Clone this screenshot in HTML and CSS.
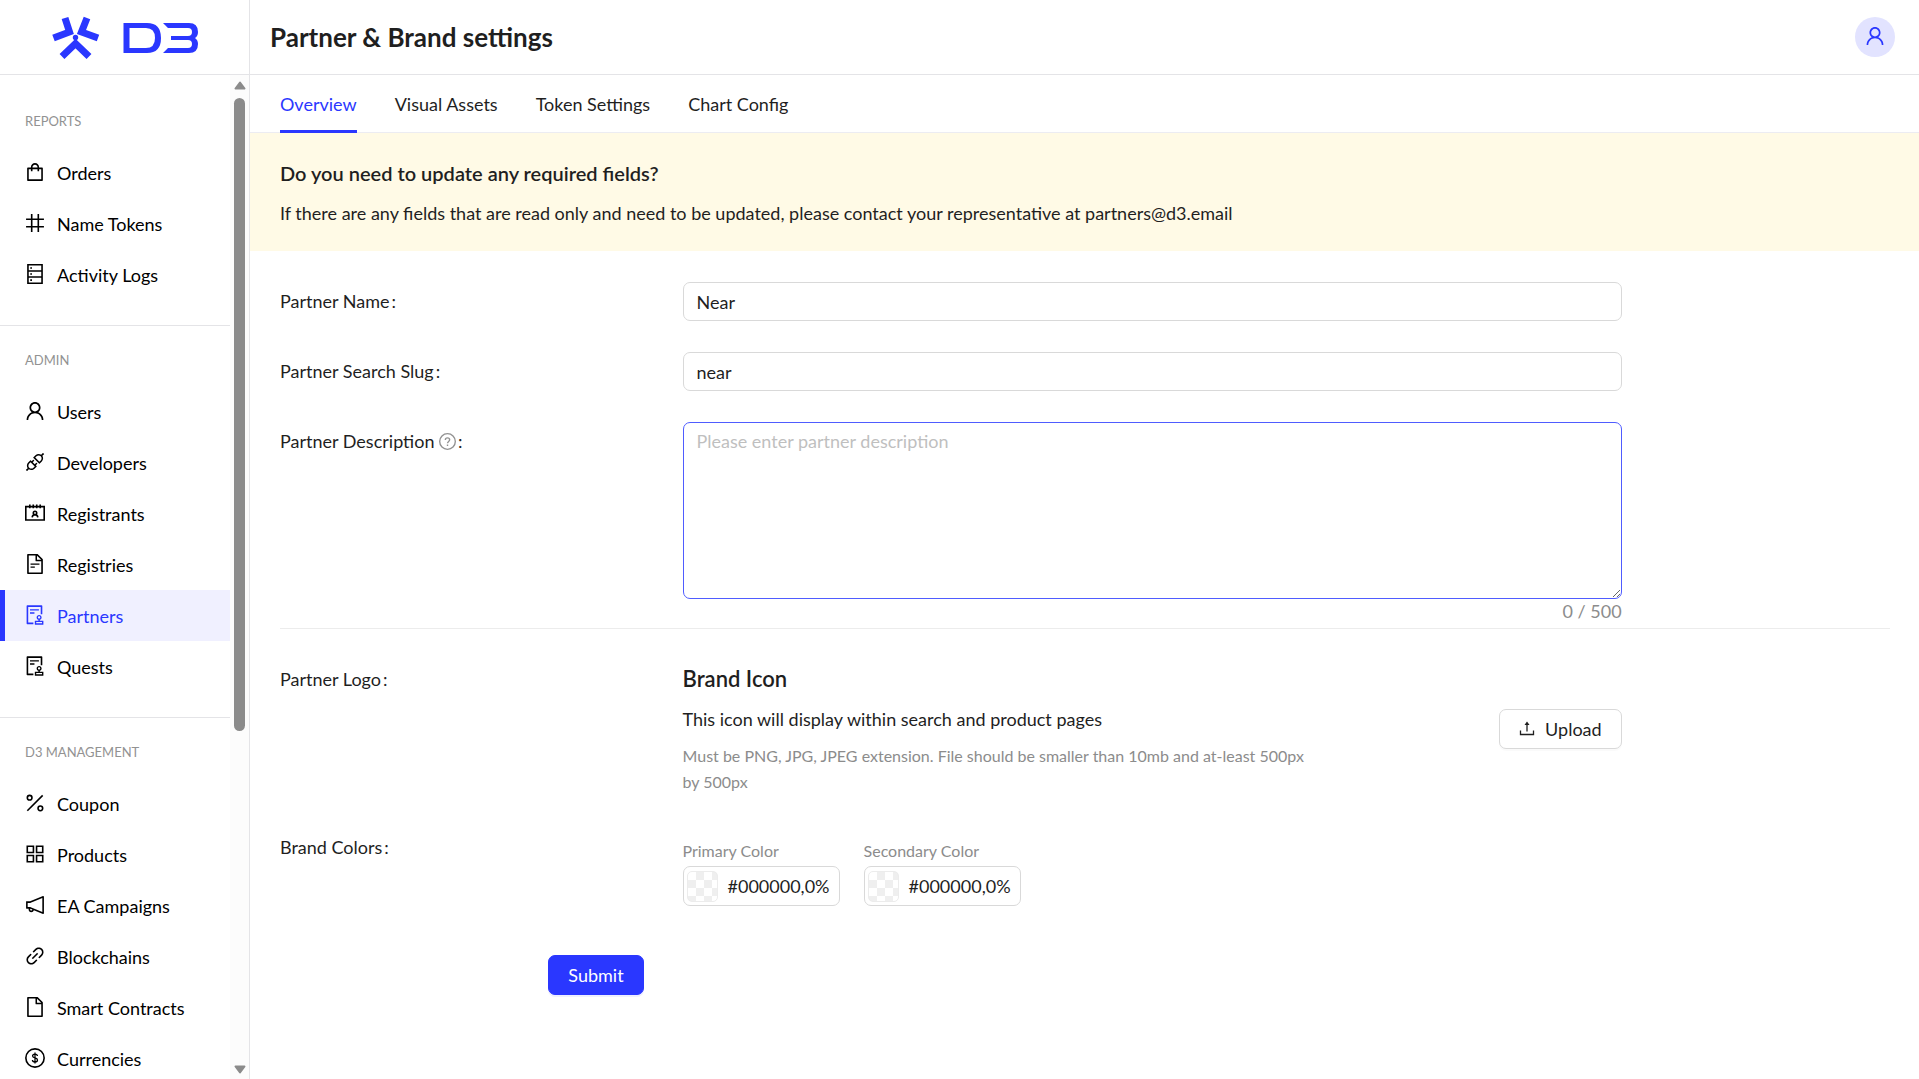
FILE: index.html
```html
<!DOCTYPE html>
<html lang="en">
<head>
	<meta charset="utf-8">
	<meta name="viewport" content="width=device-width, initial-scale=1">
	<title>Partner &amp; Brand settings</title>
	<link rel="stylesheet" href="styles.css">
</head>
<body>

	<!-- icons used more than once -->
	<svg class="sprite" aria-hidden="true">
		<symbol id="icon-user" viewBox="64 64 896 896">
			<path d="M858.5 763.6a374 374 0 00-80.6-119.5 375.63 375.63 0 00-119.5-80.6c-.4-.2-.8-.3-1.2-.5C719.5 518 760 444.7 760 362c0-137-111-248-248-248S264 225 264 362c0 82.7 40.5 156 102.8 201.1-.4.2-.8.3-1.2.5-44.8 18.9-85 46-119.5 80.6a375.63 375.63 0 00-80.6 119.5A371.7 371.7 0 00136 901.8a8 8 0 008 8.2h60c4.4 0 7.9-3.5 8-7.8 2-77.2 33-149.5 87.8-204.3 56.7-56.7 132-87.9 212.2-87.9s155.5 31.2 212.2 87.9C779 752.7 810 825 812 902.2c.1 4.4 3.6 7.8 8 7.8h60a8 8 0 008-8.2c-1-47.8-10.9-94.3-29.5-138.2zM512 534c-45.9 0-89.1-17.9-121.6-50.4S340 407.9 340 362c0-45.9 17.9-89.1 50.4-121.6S466.1 190 512 190s89.1 17.9 121.6 50.4S684 316.1 684 362c0 45.9-17.9 89.1-50.4 121.6S557.9 534 512 534z"/>
		</symbol>
		<symbol id="icon-file" viewBox="64 64 896 896">
			<path d="M854.6 288.6L639.4 73.4c-6-6-14.1-9.4-22.6-9.4H192c-17.7 0-32 14.3-32 32v832c0 17.7 14.3 32 32 32h640c17.7 0 32-14.3 32-32V311.3c0-8.5-3.4-16.7-9.4-22.7zM790.2 326H602V137.8L790.2 326zm1.8 562H232V136h302v216a42 42 0 0042 42h216v494z"/>
		</symbol>
		<symbol id="icon-audit" viewBox="64 64 896 896">
			<path d="M296 250c-4.400 0-8 3.600-8 8v48c0 4.400 3.600 8 8 8h384c4.400 0 8-3.600 8-8v-48c0-4.400-3.600-8-8-8H296zm184 144H296c-4.400 0-8 3.600-8 8v48c0 4.400 3.600 8 8 8h184c4.400 0 8-3.600 8-8v-48c0-4.400-3.600-8-8-8zm-48 458H208V148h560v320c0 4.400 3.600 8 8 8h56c4.400 0 8-3.600 8-8V108c0-17.700-14.300-32-32-32H168c-17.700 0-32 14.300-32 32v784c0 17.700 14.300 32 32 32h264c4.400 0 8-3.600 8-8v-56c0-4.400-3.600-8-8-8zm440-88H728v-36.600c46.300-13.800 80-56.600 80-107.400 0-61.900-50.100-112-112-112s-112 50.100-112 112c0 50.700 33.700 93.600 80 107.400V764H520c-8.800 0-16 7.200-16 16v152c0 8.800 7.200 16 16 16h352c8.800 0 16-7.200 16-16V780c0-8.800-7.200-16-16-16zM646 620c0-27.600 22.400-50 50-50s50 22.400 50 50-22.400 50-50 50-50-22.400-50-50zm180 266H566v-60h260v60z"/>
		</symbol>
	</svg>

	<div class="layout">
		<aside class="sidebar">
			<a class="logo" href="#" aria-label="D3">
				<svg viewBox="0 0 147 44" width="147" height="44">
					<g fill="none" stroke="#2a37ff" stroke-width="7">
						<path d="M14 3l4.500 14L2.500 23"/>
						<path d="M36 3l-5.500 14L47 23"/>
						<path d="M11 41.500l13.500-13 13.500 13"/>
					</g>
					<circle cx="24.500" cy="22.500" r="2.700" fill="#2a37ff"/>
					<path fill="#2a37ff" fill-rule="evenodd" d="M72.500 8H96q14 0 14 15T96 38H72.500zM78.500 13v20H95q9 0 9-10T95 13z"/>
					<path fill="#2a37ff" d="M112 8h26q9 0 9 9 0 4-3 6 3 2 3 6 0 9-9 9h-26l5-5h20q4 0 4-4t-4-4h-17v-4h17q4 0 4-4t-4-4h-20z"/>
				</svg>
			</a>
			<div class="sidebar-body">
				<nav class="menu">
					<section class="menu-group">
						<h2>REPORTS</h2>
						<a href="#">
							<svg class="icon" viewBox="64 64 896 896"><path d="M832 312H696v-16c0-101.600-82.400-184-184-184s-184 82.400-184 184v16H192c-17.700 0-32 14.300-32 32v536c0 17.700 14.300 32 32 32h640c17.700 0 32-14.300 32-32V344c0-17.700-14.300-32-32-32zm-432-16c0-61.900 50.100-112 112-112s112 50.100 112 112v16H400v-16zm392 544H232V384h96v88c0 4.400 3.600 8 8 8h56c4.400 0 8-3.600 8-8v-88h224v88c0 4.400 3.600 8 8 8h56c4.400 0 8-3.600 8-8v-88h96v456z"/></svg>
							Orders
						</a>
						<a href="#">
							<svg class="icon line" viewBox="64 64 896 896"><path d="M112 346h800M112 678h800M364 112v800M660 112v800"/></svg>
							Name Tokens
						</a>
						<a href="#">
							<svg class="icon line" viewBox="64 64 896 896"><path d="M196 100h632v824H196zM196 380h632M196 644h632"/><path d="M300 240h76M300 512h76M300 784h76"/></svg>
							Activity Logs
						</a>
					</section>
					<section class="menu-group">
						<h2>ADMIN</h2>
						<a href="#">
							<svg class="icon"><use href="#icon-user"/></svg>
							Users
						</a>
						<a href="#">
							<svg class="icon" viewBox="64 64 896 896"><path d="M917.700 148.800l-42.400-42.400c-1.600-1.600-3.600-2.300-5.700-2.300s-4.100.8-5.700 2.300l-76.100 76.100a199.270 199.270 0 00-112.100-34.300c-51.200 0-102.400 19.500-141.500 58.600L432.300 308.700a8.030 8.030 0 000 11.300L704 591.700c1.600 1.600 3.600 2.300 5.700 2.300 2 0 4.100-.8 5.700-2.300l101.900-101.900c68.900-69 77-175.700 24.300-253.500l76.100-76.100c3.100-3.200 3.100-8.300 0-11.400zM769.100 441.700l-59.400 59.400-186.800-186.800 59.400-59.400c24.900-24.900 58.100-38.700 93.400-38.700 35.300 0 68.400 13.700 93.400 38.700 24.900 24.900 38.700 58.100 38.700 93.400 0 35.300-13.800 68.400-38.700 93.400zm-190.200 105a8.030 8.030 0 00-11.300 0L501 613.300 410.700 523l66.700-66.700c3.100-3.100 3.100-8.200 0-11.300L441 408.600a8.030 8.030 0 00-11.300 0L363 475.300l-43-43a7.850 7.850 0 00-5.700-2.300c-2 0-4.100.8-5.700 2.300L206.800 534.200c-68.900 69-77 175.700-24.300 253.500l-76.100 76.100a8.030 8.030 0 000 11.300l42.400 42.400c1.600 1.600 3.600 2.300 5.700 2.300s4.100-.8 5.700-2.300l76.100-76.100c33.700 22.900 72.900 34.300 112.100 34.300 51.200 0 102.400-19.500 141.500-58.600l101.900-101.900c3.100-3.100 3.100-8.200 0-11.300l-43-43 66.700-66.700c3.100-3.100 3.100-8.200 0-11.300l-36.600-36.200zM441.700 769.100a131.320 131.320 0 01-93.400 38.700c-35.300 0-68.400-13.700-93.400-38.700a131.320 131.320 0 01-38.700-93.400c0-35.300 13.700-68.400 38.700-93.400l59.400-59.400 186.800 186.800-59.400 59.400z"/></svg>
							Developers
						</a>
						<a href="#">
							<svg class="icon line" viewBox="64 64 896 896"><path d="M100 228h824v600H100z"/><path d="M280 130v166M434 130v166M590 130v166M744 130v166"/><path d="M386 706c6-76 58-116 126-116s120 40 126 116"/><circle cx="512" cy="508" r="76"/></svg>
							Registrants
						</a>
						<a href="#">
							<svg class="icon line" viewBox="64 64 896 896"><use href="#icon-file" x="64" y="64" width="896" height="896" class="solid"/><path class="thin" d="M312 516h400M312 652h192"/></svg>
							Registries
						</a>
						<a href="#" class="active" aria-current="page">
							<svg class="icon"><use href="#icon-audit"/></svg>
							Partners
						</a>
						<a href="#">
							<svg class="icon"><use href="#icon-audit"/></svg>
							Quests
						</a>
					</section>
					<section class="menu-group">
						<h2>D3 MANAGEMENT</h2>
						<a href="#">
							<svg class="icon line" viewBox="64 64 896 896"><path d="M856 172L168 860"/><circle cx="272" cy="272" r="104"/><circle cx="752" cy="752" r="104"/></svg>
							Coupon
						</a>
						<a href="#">
							<svg class="icon line" viewBox="64 64 896 896"><path d="M166 166h276v276H166zM582 166h276v276H582zM166 582h276v276H166zM582 582h276v276H582z"/></svg>
							Products
						</a>
						<a href="#">
							<svg class="icon" viewBox="64 64 896 896"><path d="M880 112c-3.800 0-7.700.7-11.600 2.300L292 345.900H128c-8.800 0-16 7.400-16 16.600v299c0 9.200 7.200 16.600 16 16.600h101.700c-3.700 11.600-5.700 23.900-5.700 36.400 0 65.900 53.800 119.500 120 119.500 55.400 0 102.100-37.600 115.900-88.400l408.600 164.200c3.900 1.500 7.800 2.300 11.600 2.300 16.900 0 32-14.200 32-33.200V145.200C912 126.200 897 112 880 112zM344 762.300c-26.500 0-48-21.400-48-47.800 0-11.200 3.900-21.900 11-30.400l84.900 34.100c-2 24.600-22.700 44.100-47.900 44.100zm496 58.400L318.800 611.300l-12.900-5.200H184V417.900h121.900l12.900-5.200L840 203.300v617.400z"/></svg>
							EA Campaigns
						</a>
						<a href="#">
							<svg class="icon" viewBox="64 64 896 896"><path d="M574 665.400a8.030 8.030 0 00-11.300 0L446.500 781.600c-53.800 53.800-144.600 59.500-204 0-59.500-59.500-53.800-150.200 0-204l116.200-116.200c3.100-3.100 3.100-8.200 0-11.300l-39.800-39.800a8.030 8.030 0 00-11.300 0L191.400 526.500c-84.600 84.600-84.600 221.500 0 306s221.500 84.600 306 0l116.200-116.200c3.100-3.100 3.100-8.200 0-11.300L574 665.400zm258.600-474c-84.600-84.600-221.500-84.600-306 0L410.300 307.600a8.030 8.030 0 000 11.300l39.700 39.700c3.100 3.100 8.200 3.100 11.300 0l116.200-116.200c53.800-53.800 144.600-59.500 204 0 59.500 59.500 53.800 150.200 0 204L665.300 562.600a8.030 8.030 0 000 11.300l39.800 39.800c3.100 3.100 8.200 3.100 11.300 0l116.200-116.200c84.500-84.600 84.500-221.500 0-306.100zM610.100 372.300a8.030 8.030 0 00-11.300 0L372.300 598.700a8.030 8.030 0 000 11.300l39.600 39.600c3.100 3.100 8.200 3.100 11.300 0l226.400-226.400c3.100-3.100 3.100-8.200 0-11.300l-39.500-39.600z"/></svg>
							Blockchains
						</a>
						<a href="#">
							<svg class="icon"><use href="#icon-file"/></svg>
							Smart Contracts
						</a>
						<a href="#">
							<svg class="icon line" viewBox="64 64 896 896"><circle cx="512" cy="512" r="410"/><path class="thin" d="M620 420c-4-58-50-86-108-86s-108 30-108 86c0 118 220 62 220 182 0 60-50 90-112 90s-112-30-116-92M512 270v484"/></svg>
							Currencies
						</a>
					</section>
				</nav>
				<div class="scrollbar" aria-hidden="true">
					<svg viewBox="0 0 12 9" width="12" height="9"><path d="M6 1.500L10.500 7.500H1.500z"/></svg>
					<div class="scrollbar-track"><div class="scrollbar-thumb"></div></div>
					<svg viewBox="0 0 12 9" width="12" height="9"><path d="M6 7.500L10.500 1.500H1.500z"/></svg>
				</div>
			</div>
		</aside>

		<div class="main">
			<header class="header">
				<h1>Partner &amp; Brand settings</h1>
				<button type="button" class="avatar" aria-label="Account">
					<svg class="icon"><use href="#icon-user"/></svg>
				</button>
			</header>

			<nav class="tabs">
				<a href="#" class="active" aria-current="page">Overview</a>
				<a href="#">Visual Assets</a>
				<a href="#">Token Settings</a>
				<a href="#">Chart Config</a>
			</nav>

			<div class="banner">
				<h2>Do you need to update any required fields?</h2>
				<p>If there are any fields that are read only and need to be updated, please contact your representative at partners@d3.email</p>
			</div>

			<form class="form">
				<div class="row">
					<label class="label" for="name">Partner Name</label>
					<input class="control" id="name" type="text" value="Near">
				</div>
				<div class="row">
					<label class="label" for="slug">Partner Search Slug</label>
					<input class="control" id="slug" type="text" value="near">
				</div>
				<div class="row description">
					<label class="label" for="description">Partner Description
						<svg class="help" viewBox="64 64 896 896"><circle cx="512" cy="512" r="412"/><path d="M398 430c0-64 48-110 114-110s114 46 114 106c0 84-114 84-114 180M512 672v72"/></svg></label>
					<div>
						<textarea class="control" id="description" maxlength="500" placeholder="Please enter partner description"></textarea>
						<div class="count">0 / 500</div>
					</div>
				</div>

				<hr>

				<div class="row logo-row">
					<span class="label">Partner Logo</span>
					<div class="upload">
						<div class="upload-text">
							<h3>Brand Icon</h3>
							<p>This icon will display within search and product pages</p>
							<p class="hint">Must be PNG, JPG, JPEG extension. File should be smaller than 10mb and at-least 500px by 500px</p>
						</div>
						<button type="button" class="btn">
							<svg class="btn-icon" viewBox="0 0 16 16"><path d="M1.500 9.500v4h13v-4M8 10.500V2"/><path class="tip" d="M8 .5l2.500 3.500h-5z"/></svg>
							Upload
						</button>
					</div>
				</div>

				<div class="row colors-row">
					<span class="label">Brand Colors</span>
					<div class="colors">
						<div class="color">
							<label for="primary">Primary Color</label>
							<button type="button" class="picker" id="primary"><span class="swatch"></span>#000000,0%</button>
						</div>
						<div class="color">
							<label for="secondary">Secondary Color</label>
							<button type="button" class="picker" id="secondary"><span class="swatch"></span>#000000,0%</button>
						</div>
					</div>
				</div>

				<div class="row submit-row">
					<button type="submit" class="btn primary">Submit</button>
				</div>
			</form>
		</div>
	</div>

</body>
</html>
```
FILE: styles.css
```css
* {
	box-sizing: border-box;
}

body {
	margin: 0;
	font-family: Lato, "Open Sans", sans-serif;
	font-size: 18px;
	line-height: 28px;
	color: #1f1f1f;
	background: #fff;
}

h1, h2, h3, p {
	margin: 0;
}

a {
	color: inherit;
	text-decoration: none;
}

button, input, textarea {
	font: inherit;
	color: inherit;
}

button {
	cursor: pointer;
}

.sprite {
	display: none;
}

.layout {
	display: flex;
	height: 100vh;
	overflow: hidden;
}

/* sidebar */

.sidebar {
	display: flex;
	flex-direction: column;
	flex: 0 0 250px;
	border-right: 1px solid #e4e4e7;
	color: #000;
}

.logo {
	display: flex;
	flex: none;
	justify-content: center;
	align-items: center;
	height: 75px;
	border-bottom: 1px solid #e4e4e7;
}

.sidebar-body {
	display: flex;
	flex: 1;
	min-height: 0;
}

.menu {
	flex: 1;
	padding-top: 12px;
	overflow: hidden;
}

.menu-group {
	padding-bottom: 25px;
}

.menu-group + .menu-group {
	border-top: 1px solid #e4e4e7;
}

.menu-group h2 {
	padding: 24px 25px 16px;
	font-size: 13px;
	font-weight: 400;
	line-height: 20px;
	color: #929292;
}

.menu-group a {
	display: flex;
	align-items: center;
	gap: 12px;
	height: 51px;
	padding-left: 25px;
}

.menu-group a.active {
	border-left: 5px solid #2a37ff;
	padding-left: 20px;
	color: #2a37ff;
	background: #f0f0ff;
}

.icon {
	flex: none;
	width: 20px;
	height: 20px;
	margin-bottom: 2px;
	fill: currentColor;
}

.line {
	fill: none;
	stroke: currentColor;
	stroke-width: 72px;
}

.line .thin {
	stroke-width: 58px;
}

.line .solid {
	fill: currentColor;
	stroke: none;
}

.scrollbar {
	display: flex;
	flex-direction: column;
	align-items: center;
	gap: 8px;
	width: 19px;
	padding: 6px 0 5px;
	background: #fcfcfc;
}

.scrollbar path {
	fill: #8b8b8b;
	stroke: #8b8b8b;
	stroke-width: 2px;
	stroke-linejoin: round;
}

.scrollbar-track {
	flex: 1;
}

.scrollbar-thumb {
	width: 11px;
	height: 66%;
	border-radius: 6px;
	background: #8b8b8b;
}

/* header and tabs */

.main {
	flex: 1;
	min-width: 0;
	overflow: hidden;
}

.header {
	display: flex;
	justify-content: space-between;
	align-items: center;
	height: 75px;
	padding: 0 24px 0 20px;
	border-bottom: 1px solid #e4e4e7;
}

.header h1 {
	font-size: 26px;
	line-height: 36px;
}

.avatar {
	display: flex;
	justify-content: center;
	align-items: center;
	width: 40px;
	height: 40px;
	padding: 0;
	border: none;
	border-radius: 50%;
	color: #2a37ff;
	background: #e2e3ff;
}

.tabs {
	display: flex;
	gap: 38px;
	height: 58px;
	padding: 0 30px;
	border-bottom: 1px solid #ececf2;
}

.tabs a {
	height: 58px;
	padding: 15px 0 12px;
	border-bottom: 3px solid transparent;
}

.tabs a.active {
	color: #2a37ff;
	border-color: #2a37ff;
}

.banner {
	padding: 24px 30px 22px;
	background: #fffae6;
}

.banner h2 {
	margin-bottom: 8px;
	font-size: 20px;
	font-weight: 600;
	line-height: 32px;
}

.banner p {
	line-height: 32px;
}

/* form */

.form {
	padding: 31px 29px 0 30px;
}

.row {
	display: grid;
	grid-template-columns: 6fr 14fr 4fr;
	margin-bottom: 31px;
}

.label {
	padding-top: 5px;
}

.label::after {
	content: ":";
	margin-left: 2px;
}

.help {
	width: 17px;
	height: 17px;
	vertical-align: -2px;
	fill: none;
	stroke: #929292;
	stroke-width: 72px;
}

.control {
	display: block;
	width: 100%;
	height: 39px;
	padding: 4px 13px;
	border: 1px solid #d9d9d9;
	border-radius: 7px;
	outline: none;
	background: #fff;
}

textarea.control {
	height: 177px;
	border-color: #4f5cff;
	resize: vertical;
}

.control::placeholder {
	color: #bfbfbf;
}

.description {
	margin-bottom: 5px;
}

.count {
	line-height: 24px;
	text-align: right;
	color: #8c8c8c;
}

hr {
	margin: 0 0 34px;
	border: none;
	border-top: 1px solid #ececec;
}

.logo-row {
	margin-bottom: 38px;
}

.logo-row .label {
	padding-top: 2px;
}

.upload {
	display: flex;
	justify-content: space-between;
	align-items: center;
}

.upload-text {
	flex: 0 0 68%;
}

.upload h3 {
	margin-bottom: 10px;
	font-size: 22px;
	font-weight: 600;
	line-height: 32px;
}

.upload .hint {
	margin-top: 10px;
	font-size: 16px;
	line-height: 26px;
	color: #8c8c8c;
}

.btn {
	display: flex;
	align-items: center;
	gap: 10px;
	height: 40px;
	padding: 0 19px;
	border: 1px solid #d9d9d9;
	border-radius: 7px;
	background: #fff;
	box-shadow: 0 2px 0 rgba(0, 0, 0, .02);
}

.btn-icon {
	width: 16px;
	height: 16px;
	fill: none;
	stroke: currentColor;
	stroke-width: 1.3px;
}

.btn-icon .tip {
	fill: currentColor;
	stroke: none;
}

.btn.primary {
	border-color: #2a37ff;
	color: #fff;
	background: #2a37ff;
	box-shadow: 0 2px 0 rgba(42, 55, 255, .08);
}

.colors-row .label {
	padding-top: 0;
}

.colors {
	display: flex;
	gap: 24px;
	padding-top: 5px;
}

.color label {
	display: block;
	margin-bottom: 2px;
	font-size: 16px;
	line-height: 26px;
	color: #8c8c8c;
}

.picker {
	display: flex;
	align-items: center;
	gap: 10px;
	height: 40px;
	padding: 0 9px 0 3px;
	border: 1px solid #d9d9d9;
	border-radius: 7px;
	background: #fff;
}

.swatch {
	width: 31px;
	height: 31px;
	border: 1px solid #ececec;
	border-radius: 5px;
	background: conic-gradient(#efefef 25%, #fff 0 50%, #efefef 0 75%, #fff 0) 0 0 / 16px 16px;
}

.submit-row {
	grid-template-columns: 4fr 20fr;
	padding-top: 18px;
}

.submit-row .btn {
	grid-column: 2;
	justify-self: start;
}
```
